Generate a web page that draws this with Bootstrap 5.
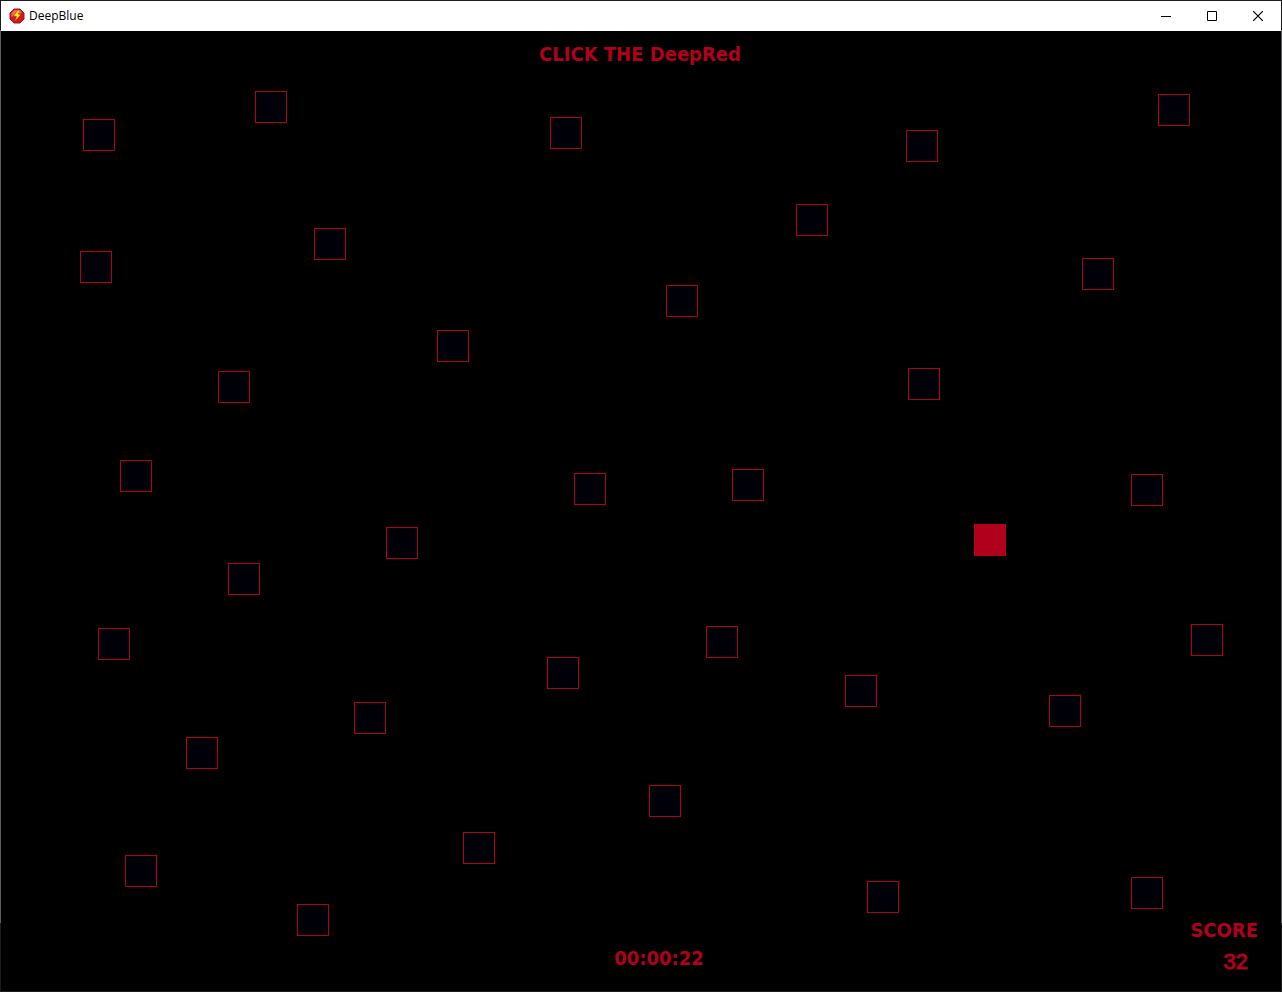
<!DOCTYPE html>
<html lang="en">
<head>
<meta charset="utf-8">
<meta name="viewport" content="width=device-width, initial-scale=1">
<title>DeepBlue</title>
<link href="https://cdn.jsdelivr.net/npm/bootstrap@5.3.0/dist/css/bootstrap.min.css" rel="stylesheet">
<style>
  :root { --deep-red: #b0001c; }
  body { background: #000; }
  .app-window { border: 1px solid; border-image: linear-gradient(#1c1c1f 3%, #5c5f63 3%, #5c5f63 93%, #1c1c1f 93%) 1; }
  .title-bar { height: 30px; background: #fff; color: #000; font-family: "Open Sans", "Noto Sans", sans-serif; font-size: 12px; line-height: 16px; }
  .caption-btn { width: 46px; height: 29px; }
  .caption-btn svg, .app-icon { display: block; }
  .game { background: #000; color: var(--deep-red); font-family: "DejaVu Sans Condensed", "DejaVu Sans", sans-serif; font-stretch: condensed; font-weight: 700; font-size: 20px; line-height: 24px; }
  .tile { width: 32px; height: 32px; padding: 0; border: 1px solid var(--deep-red); background: #000009; }
  .tile.target { background: var(--deep-red); }
  .hud-top { padding: 11px 2px 0 0; }
  .timer { padding: 0 0 21px 36px; }
  .score-box { right: 23px; bottom: 17px; }
  .points { padding: 8px 10px 0 0; font-family: "Liberation Sans", Arial, sans-serif; font-weight: 400; font-size: 22px; line-height: 24px; -webkit-text-stroke: 1px var(--deep-red); }
</style>
</head>
<body>
<div class="app-window vh-100 d-flex flex-column overflow-hidden">
  <header class="title-bar d-flex align-items-center flex-shrink-0">
    <svg class="app-icon ms-2" width="16" height="16" viewBox="0 0 16 16" aria-hidden="true">
      <path d="M5 1h6l4 4v6l-4 4H5l-4-4V5z" fill="#d61622" stroke="#a81218"/>
      <path d="M5.5 2h5L13 5 9 6 2.5 9V5z" fill="#f06a6c"/>
      <path d="M9 2 4.500 8l3 .5L5.500 13.500l6.500-7-3-.5L11.500 2.500z" fill="#ffe800" stroke="#6e4200" stroke-width=".5"/>
    </svg>
    <span class="ps-1 me-auto">DeepBlue</span>
    <button class="caption-btn btn p-0 border-0 rounded-0 d-flex align-items-center justify-content-center" aria-label="Minimize"><svg width="10" height="10"><path d="M0 5.500h10" stroke="#000"/></svg></button>
    <button class="caption-btn btn p-0 border-0 rounded-0 d-flex align-items-center justify-content-center" aria-label="Maximize"><svg width="10" height="10"><path d="M.5.5h9v9h-9z" fill="none" stroke="#000"/></svg></button>
    <button class="caption-btn btn p-0 border-0 rounded-0 d-flex align-items-center justify-content-center" aria-label="Close"><svg width="10" height="10"><path d="m0 0 10 10M10 0 0 10" stroke="#000" stroke-width="1.200"/></svg></button>
  </header>
  <main class="game flex-grow-1 position-relative d-flex flex-column justify-content-between align-items-center">
    <div class="hud-top">CLICK THE DeepRed</div>
    <div id="tiles"></div>
    <div class="timer">00:00:22</div>
    <div class="score-box position-absolute text-end">
      <div>SCORE</div>
      <div class="points">32</div>
    </div>
  </main>
</div>
<script>
  // Tile positions on the board, measured from the board's top left corner.
  const tiles = [
    [82, 88], [254, 60], [549, 86], [905, 99], [1157, 63], [795, 173],
    [313, 197], [79, 220], [1081, 227], [665, 254], [436, 299], [217, 340],
    [907, 337], [119, 429], [573, 442], [731, 438], [1130, 443], [385, 496],
    [973, 493], [227, 532], [97, 597], [705, 595], [1190, 593], [546, 626],
    [844, 644], [1048, 664], [353, 671], [185, 706], [648, 754], [462, 801],
    [124, 824], [866, 850], [1130, 846], [296, 873]
  ];
  const targetIndex = 18;
  const board = document.getElementById('tiles');
  tiles.forEach(([x, y], i) => {
    const tile = document.createElement('button');
    tile.className = 'tile position-absolute' + (i === targetIndex ? ' target' : '');
    tile.setAttribute('aria-label', i === targetIndex ? 'DeepRed' : 'Tile');
    tile.style.left = x + 'px';
    tile.style.top = y + 'px';
    board.append(tile);
  });
</script>
<script src="https://cdn.jsdelivr.net/npm/bootstrap@5.3.0/dist/js/bootstrap.bundle.min.js"></script>
</body>
</html>
